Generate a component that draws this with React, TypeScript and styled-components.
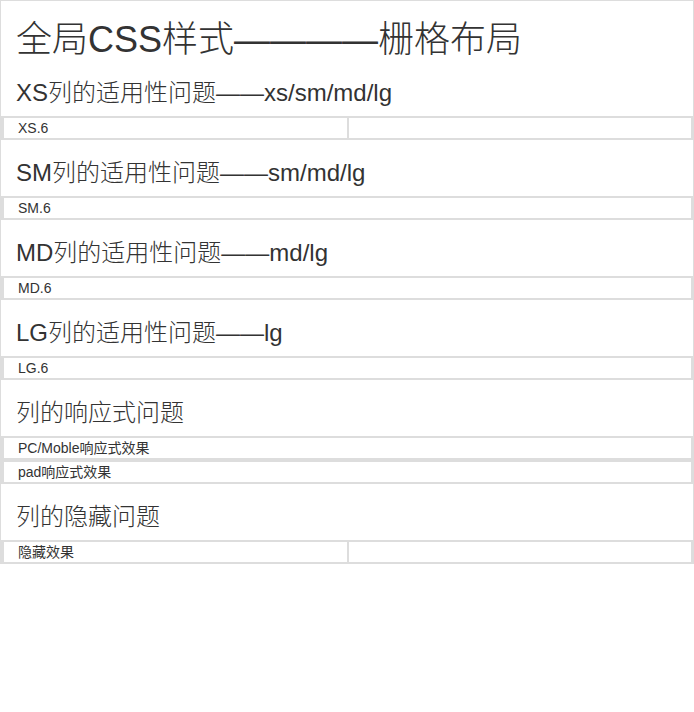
import React from "react"
import styled, { createGlobalStyle } from "styled-components"

const GlobalStyle = createGlobalStyle`
  html, body {
    margin: 0;
    padding: 0;
    background: #fff;
  }
  body {
    font-family: "Liberation Sans", "Noto Sans CJK SC", sans-serif;
    font-size: 14px;
    line-height: 20px;
    color: #333;
  }
`

type RowData = {
  title: string
  rows: { cols: { label: string; half?: boolean }[] }[]
}

const sections: RowData[] = [
  {
    title: "XS列的适用性问题——xs/sm/md/lg",
    rows: [{ cols: [{ label: "XS.6", half: true }, { label: "", half: true }] }],
  },
  {
    title: "SM列的适用性问题——sm/md/lg",
    rows: [{ cols: [{ label: "SM.6" }] }],
  },
  {
    title: "MD列的适用性问题——md/lg",
    rows: [{ cols: [{ label: "MD.6" }] }],
  },
  {
    title: "LG列的适用性问题——lg",
    rows: [{ cols: [{ label: "LG.6" }] }],
  },
  {
    title: "列的响应式问题",
    rows: [
      { cols: [{ label: "PC/Moble响应式效果" }] },
      { cols: [{ label: "pad响应式效果" }] },
    ],
  },
  {
    title: "列的隐藏问题",
    rows: [{ cols: [{ label: "隐藏效果", half: true }, { label: "", half: true }] }],
  },
]

const App: React.FC = () => {
  return (
    <>
      <GlobalStyle />
      <Container>
        <PageTitle>全局CSS样式————栅格布局</PageTitle>
        {sections.map((section, i) => (
          <section key={`section-${i}`}>
            <SectionTitle>{section.title}</SectionTitle>
            {section.rows.map((row, j) => (
              <Row key={`row-${i}-${j}`}>
                {row.cols.map((col, k) => (
                  <Col key={`col-${i}-${j}-${k}`} $half={col.half}>
                    {col.label}
                  </Col>
                ))}
              </Row>
            ))}
          </section>
        ))}
      </Container>
    </>
  )
}

const Container = styled.div`
  width: 694px;
  box-sizing: border-box;
  border: 1px solid #ddd;
  border-bottom: 0;
`

const PageTitle = styled.h1`
  margin: 19px 0 0 0;
  padding: 0 15px;
  height: 40px;
  font-size: 36px;
  font-weight: 300;
  line-height: 40px;
`

const SectionTitle = styled.h3`
  margin: 20px 0 10px 0;
  padding: 0 15px;
  height: 26px;
  font-size: 24px;
  font-weight: 300;
  line-height: 26px;
`

const Row = styled.div`
  display: flex;
  background: #ddd;
  padding: 1px 1px 1px 2px;
`

const Col = styled.div<{ $half?: boolean }>`
  flex: ${(p) => (p.$half ? "1 1 0" : "1 1 auto")};
  min-width: 0;
  box-sizing: border-box;
  height: 22px;
  padding: 0 14px;
  border: 1px solid #ddd;
  background: #fff;
  font-size: 14px;
  line-height: 20px;
  color: #333;
`

export default App
